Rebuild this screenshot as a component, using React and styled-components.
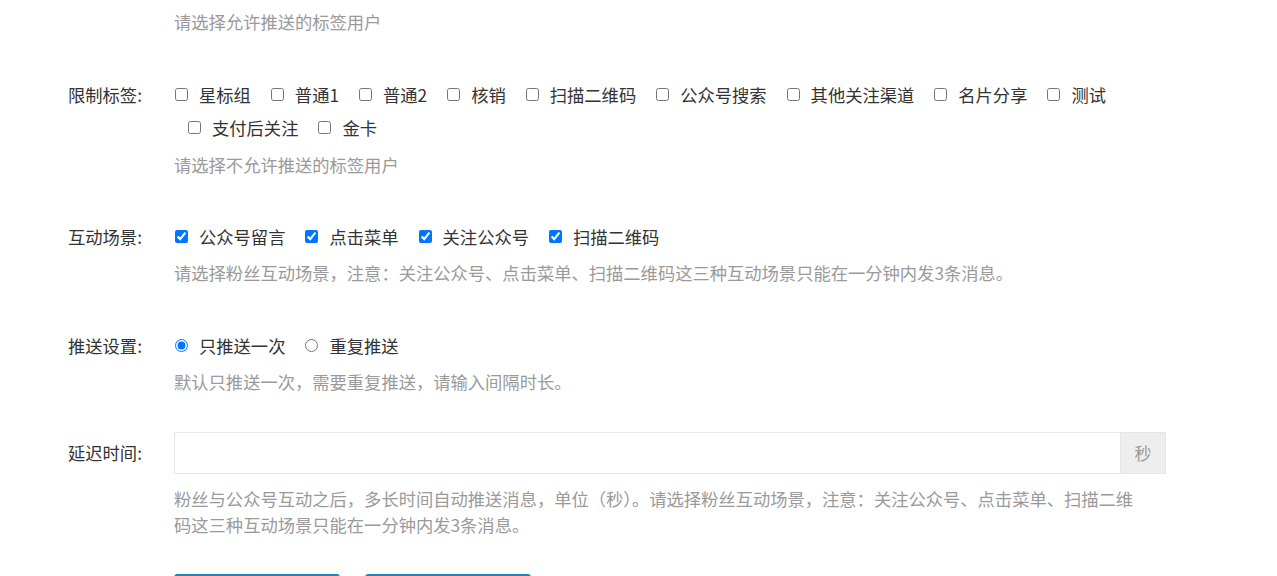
import styled, { createGlobalStyle } from "styled-components";

const GlobalStyle = createGlobalStyle`
  body {
    margin: 0;
    background: #fff;
    font-family: "Noto Sans CJK SC", "Noto Sans", sans-serif;
    color: #333;
  }
`;

const Form = styled.div`
  width: 1277px;
  padding: 9px 0 0 68px;
  box-sizing: border-box;
`;

const Item = styled.div`
  display: flex;
  align-items: flex-start;
  margin-bottom: ${(p) => p.$mb || 42}px;
`;

const Label = styled.div`
  width: 106px;
  flex-shrink: 0;
  font-size: 17.3px;
  line-height: ${(p) => p.$lh || 33}px;
  color: #333;
`;

const Control = styled.div`
  width: 992px;
  flex-shrink: 0;
`;

const Help = styled.div`
  font-size: 17.3px;
  line-height: 26px;
  color: #9a9a9a;
  margin-top: ${(p) => p.$mt || 0}px;
  padding-left: ${(p) => p.$pl || 0}px;
  max-width: ${(p) => p.$maxw || 992}px;
`;

const Options = styled.div`
  display: flex;
  flex-wrap: wrap;
`;

const Option = styled.label`
  display: inline-flex;
  align-items: center;
  height: 33px;
  font-size: 17.3px;
  color: #333;
  padding-right: 6px;
  margin-left: 13px;
  cursor: pointer;
  &:first-child {
    margin-left: 0;
  }
  input {
    width: 13px;
    height: 13px;
    margin: 0 11px 0 1px;
    accent-color: #0075ff;
  }
`;

const InputGroup = styled.div`
  display: flex;
  height: 42px;
  border: 1px solid #e5e6e7;
  box-sizing: border-box;
`;

const TextInput = styled.input`
  flex: 1;
  border: none;
  outline: none;
  padding: 0 12px;
  font-size: 16px;
  font-family: inherit;
`;

const Addon = styled.span`
  width: 44px;
  display: flex;
  align-items: center;
  justify-content: center;
  background: #eeeeee;
  color: #999;
  font-size: 17px;
  border-left: 1px solid #e5e6e7;
`;

const Buttons = styled.div`
  display: flex;
  gap: 25px;
  padding-left: 106px;
`;

const Button = styled.button`
  width: 166px;
  height: 40px;
  border: 1px solid #1c84c6;
  background: #1c84c6;
  color: #fff;
  font-size: 16px;
  font-family: inherit;
  border-radius: 3px;
`;

const allowTags = [
  "星标组",
  "普通1",
  "普通2",
  "核销",
  "扫描二维码",
  "公众号搜索",
  "其他关注渠道",
  "名片分享",
  "测试",
  "支付后关注",
  "金卡",
];

const scenes = ["公众号留言", "点击菜单", "关注公众号", "扫描二维码"];

export default function App() {
  return (
    <>
      <GlobalStyle />
      <Form>
        <Help $pl={106} $maxw={1100} style={{ marginBottom: 42.5 }}>
          请选择允许推送的标签用户
        </Help>

        <Item>
          <Label>限制标签:</Label>
          <Control>
            <Options>
              {allowTags.map((t) => (
                <Option key={t}>
                  <input type="checkbox" />
                  {t}
                </Option>
              ))}
            </Options>
            <Help $mt={8}>请选择不允许推送的标签用户</Help>
          </Control>
        </Item>

        <Item $mb={43}>
          <Label>互动场景:</Label>
          <Control>
            <Options>
              {scenes.map((t) => (
                <Option key={t}>
                  <input type="checkbox" defaultChecked />
                  {t}
                </Option>
              ))}
            </Options>
            <Help $mt={7}>
              请选择粉丝互动场景，注意：关注公众号、点击菜单、扫描二维码这三种互动场景只能在一分钟内发3条消息。
            </Help>
          </Control>
        </Item>

        <Item $mb={37}>
          <Label>推送设置:</Label>
          <Control>
            <Options>
              <Option>
                <input type="radio" name="push" defaultChecked />
                只推送一次
              </Option>
              <Option>
                <input type="radio" name="push" />
                重复推送
              </Option>
            </Options>
            <Help $mt={7}>默认只推送一次，需要重复推送，请输入间隔时长。</Help>
          </Control>
        </Item>

        <Item $mb={36}>
          <Label $lh={42}>延迟时间:</Label>
          <Control>
            <InputGroup>
              <TextInput />
              <Addon>秒</Addon>
            </InputGroup>
            <Help $mt={12} $maxw={968}>
              粉丝与公众号互动之后，多长时间自动推送消息，单位（秒）。请选择粉丝互动场景，注意：关注公众号、点击菜单、扫描二维码这三种互动场景只能在一分钟内发3条消息。
            </Help>
          </Control>
        </Item>

        <Buttons>
          <Button>保存</Button>
          <Button>返回</Button>
        </Buttons>
      </Form>
    </>
  );
}
